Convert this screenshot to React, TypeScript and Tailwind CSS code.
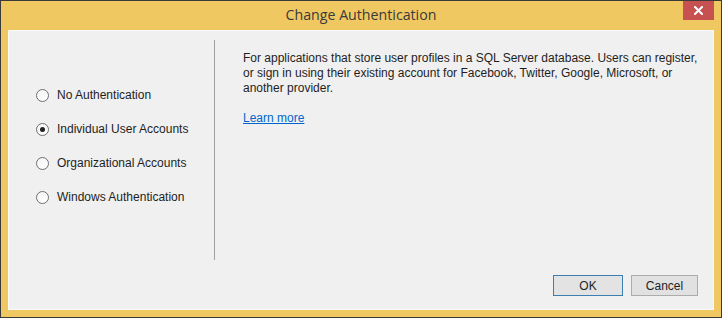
import React, { useState } from 'react';

const options = [
  'No Authentication',
  'Individual User Accounts',
  'Organizational Accounts',
  'Windows Authentication',
];

const Radio = ({ checked }: { checked: boolean }) => (
  <span className="w-[13px] h-[13px] rounded-full border border-[#6f6f6f] bg-gradient-to-br from-[#f4f4f4] to-white flex items-center justify-center shrink-0">
    {checked && <span className="w-[5px] h-[5px] rounded-full bg-[#222]" />}
  </span>
);

const App: React.FC = () => {
  const [selected, setSelected] = useState(1);

  return (
    <div className="w-[722px] h-[318px] bg-[#f0c862] border border-[#3a3a3a] flex flex-col font-['Liberation_Sans',Arial,sans-serif] text-[12px] text-[#1e1e1e]">
      {/* title bar */}
      <div className="relative h-[29px] shrink-0 flex items-center justify-center">
        <span className="text-[14.2px] text-[#3a3a3a] font-['Open_Sans',sans-serif] pb-[1px]">Change Authentication</span>
        <button className="absolute right-[7px] top-0 w-[31px] h-[19px] bg-[#c75050] flex items-center justify-center">
          <svg width="9" height="9" viewBox="0 0 9 9">
            <path d="M1 1 L8 8 M8 1 L1 8" stroke="white" strokeWidth="2" strokeLinecap="square" />
          </svg>
        </button>
      </div>

      {/* body */}
      <div className="flex-1 mx-[7px] mb-[7px] bg-[#f0f0f0] border border-[#fafafa] flex flex-col pt-[9px]">
        <div className="flex h-[220px]">
          <div className="w-[205px] flex flex-col pl-[27px] pt-[48px] gap-[20px]">
            {options.map((o, i) => (
              <label key={o} className="flex items-center gap-[8px] h-[14px] cursor-default" onClick={() => setSelected(i)}>
                <Radio checked={selected === i} />
                <span className="whitespace-nowrap leading-[14px]">{o}</span>
              </label>
            ))}
          </div>
          <div className="w-px bg-[#a0a0a0]" />
          <div className="flex-1 pl-[28px] pt-[11px]">
            <p className="leading-[15px] whitespace-nowrap">
              For applications that store user profiles in a SQL Server database. Users can register,
              <br />
              or sign in using their existing account for Facebook, Twitter, Google, Microsoft, or
              <br />
              another provider.
            </p>
            <a href="#" className="inline-block mt-[15px] text-[#0066cc] underline leading-[15px]">Learn more</a>
          </div>
        </div>
        <div className="flex justify-end gap-[8px] mt-[15px] pr-[15px]">
          <button className="w-[70px] h-[21px] border border-[#3c7fb1] bg-[#e3e3e3] text-[#1e1e1e] text-[12px] leading-none">OK</button>
          <button className="w-[67px] h-[21px] border border-[#acacac] bg-[#e1e1e1] text-[#1e1e1e] text-[12px] leading-none">Cancel</button>
        </div>
      </div>
    </div>
  );
};

export default App;
